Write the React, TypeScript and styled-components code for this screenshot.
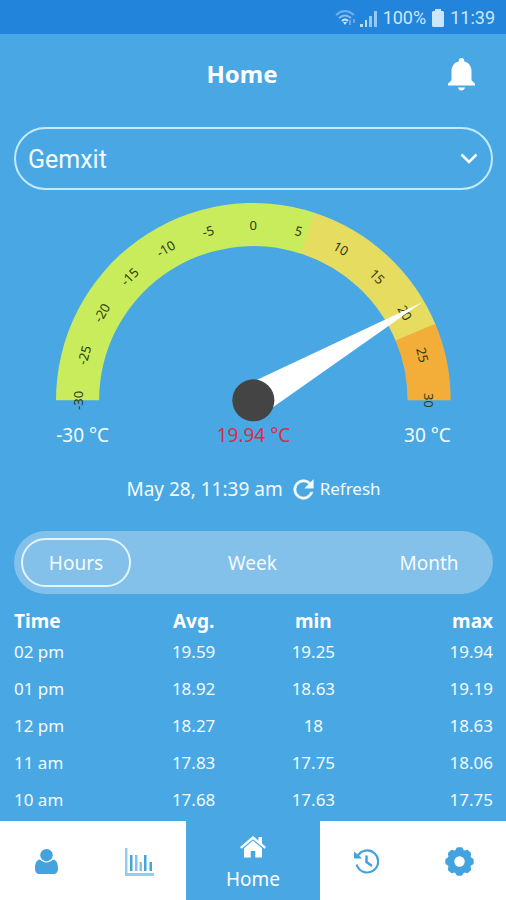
import React, { useState } from "react";
import styled, { createGlobalStyle } from "styled-components";

const BLUE = "#49a8e4";

const GlobalStyle = createGlobalStyle`
  *, *::before, *::after { box-sizing: border-box; }
  body { margin: 0; background: ${BLUE}; }
  button, select { font: inherit; color: inherit; }
`;

const Screen = styled.div`
  display: flex;
  flex-direction: column;
  min-height: 100vh;
  color: #f4fbff;
  background: ${BLUE};
  font-family: "Noto Sans", "Open Sans", sans-serif;
  font-size: 19px;
  line-height: 24px;
`;

const StatusBar = styled.div`
  display: flex;
  align-items: center;
  justify-content: flex-end;
  gap: 6px;
  height: 34px;
  padding: 2px 11px 0;
  background: #2384dc;
  color: #cbe6fb;
  font-family: Roboto, sans-serif;
  font-size: 18px;
`;

const Signals = styled.div`
  display: flex;
  align-items: center;
  gap: 3px;
`;

const Header = styled.header`
  display: grid;
  grid-template-columns: 1fr auto 1fr;
  align-items: center;
  height: 80px;
  padding: 0 31px 0 9px;
`;

const Title = styled.h1`
  grid-column: 2;
  margin: 0;
  font-size: 24px;
  line-height: 32px;
  font-weight: 700;
  color: #fff;
`;

const IconButton = styled.button`
  justify-self: end;
  display: flex;
  padding: 0;
  border: 0;
  background: none;
  color: #fff;
  cursor: pointer;
`;

const Content = styled.main`
  flex: 1;
  display: flex;
  flex-direction: column;
  padding: 13px 13px 2px 14px;
`;

const SelectBox = styled.label`
  display: grid;
  align-items: center;
  & > * { grid-area: 1 / 1; }
  & > svg { justify-self: end; margin-right: 15px; pointer-events: none; }
`;

const DeviceSelect = styled.select`
  width: 100%;
  height: 63px;
  padding: 3px 48px 0 12px;
  border: 2px solid #c3eafb;
  border-radius: 32px;
  background: transparent;
  appearance: none;
  font-family: Roboto, sans-serif;
  font-size: 25px;
`;

const Gauge = styled.section`
  align-self: center;
  width: 82.4%;
  margin-top: 13px;
`;

const Dial = styled.svg`
  display: block;
  width: 100%;
  overflow: visible;
`;

const DialText = styled.text`
  font-family: "Noto Sans", sans-serif;
  font-size: 13px;
  fill: #2e3a14;
  text-anchor: middle;
`;

const Readings = styled.div`
  display: grid;
  grid-template-columns: 1fr auto 1fr;
  margin-top: 1px;
`;

const Reading = styled.span<{ $align?: string; $alert?: boolean }>`
  text-align: ${(p) => p.$align ?? "center"};
  color: ${(p) => (p.$alert ? "#dc2b4b" : "inherit")};
`;

const UpdateRow = styled.div`
  display: flex;
  align-items: center;
  justify-content: center;
  gap: 10px;
  margin-top: 30px;
`;

const RefreshButton = styled.button`
  display: flex;
  align-items: center;
  gap: 6px;
  padding: 0;
  border: 0;
  background: none;
  font-size: 17px;
  cursor: pointer;
`;

const Tabs = styled.div`
  display: flex;
  justify-content: space-between;
  height: 63px;
  margin-top: 30px;
  padding: 7px 9px 7px 7px;
  border-radius: 32px;
  background: #83c1eb;
`;

const Tab = styled.button<{ $active: boolean }>`
  width: 110px;
  border: 2px solid ${(p) => (p.$active ? "#e2f4fd" : "transparent")};
  border-radius: 25px;
  background: none;
  cursor: pointer;
`;

const Table = styled.table`
  width: 100%;
  margin-top: 15px;
  border-collapse: collapse;
  table-layout: fixed;
  text-align: center;
`;

const HeadCell = styled.th`
  height: 24px;
  padding: 0;
  color: #fff;
  font-weight: 700;
  &:first-child { text-align: left; }
  &:last-child { text-align: right; }
`;

const Cell = styled.td`
  height: 37px;
  padding: 0;
  font-size: 17px;
  &:first-child { text-align: left; }
  &:last-child { text-align: right; }
`;

const Nav = styled.nav`
  display: flex;
  height: 79px;
  background: #fff;
`;

const NavItem = styled.a<{ $active?: boolean }>`
  display: flex;
  flex: ${(p) => (p.$active ? "0 0 134px" : "1 1 0")};
  flex-direction: column;
  align-items: center;
  justify-content: center;
  gap: 9px;
  padding-top: ${(p) => (p.$active ? "5px" : "2px")};
  color: ${(p) => (p.$active ? "#fff" : "#43a3df")};
  background: ${(p) => (p.$active ? BLUE : "#fff")};
  text-decoration: none;
`;

const CX = 197;
const CY = 197;
const OUTER = 197;
const INNER = 154;

/* The scale runs from -30 to 30 over half a turn: three degrees per unit. */
const point = (value: number, radius: number) => {
  const a = (value * 3 * Math.PI) / 180;
  return `${CX + radius * Math.sin(a)} ${CY - radius * Math.cos(a)}`;
};

const band = (from: number, to: number) =>
  `M${point(from, OUTER)} A${OUTER} ${OUTER} 0 0 1 ${point(to, OUTER)} ` +
  `L${point(to, INNER)} A${INNER} ${INNER} 0 0 0 ${point(from, INNER)} Z`;

const TICKS = [-30, -25, -20, -15, -10, -5, 0, 5, 10, 15, 20, 25, 30];

const GaugeDial = ({ value }: { value: number }) => (
  <Dial viewBox="0 0 394 219" role="img" aria-label={`Temperature ${value} °C`}>
    <path d={band(-30, 6.1)} fill="#c9ec5c" />
    <path d={band(6, 22.5)} fill="#e5dc60" />
    <path d={band(22.4, 30)} fill="#f3ae3a" />
    {TICKS.map((t) => (
      <DialText key={t} x={CX} y={CY - 170} transform={`rotate(${t * 3} ${CX} ${CY})`}>
        {t}
      </DialText>
    ))}
    <polygon
      points={`${CX - 17},${CY} ${CX},${CY - 195} ${CX + 17},${CY}`}
      fill="#fff"
      transform={`rotate(${value * 3} ${CX} ${CY})`}
    />
    <circle cx={CX} cy={CY} r="21" fill="#444" />
  </Dial>
);

const WifiIcon = () => (
  <svg width="22" height="18" viewBox="0 0 22 18" fill="none" stroke="currentColor" strokeWidth="2">
    <path d="M1 6Q10-2 19 6" opacity=".45" />
    <path d="M4 9Q10 4 16 9" opacity=".6" />
    <path d="M7 12Q10 9 13 12" />
    <path d="M8 13h4l-2 3z" fill="currentColor" stroke="none" />
    <path d="M15 11v5M19 10v4" opacity=".4" />
  </svg>
);

const SignalIcon = () => (
  <svg width="17" height="17" viewBox="0 0 17 17" fill="currentColor">
    <path d="M0 14h3v3H0zM5 10h2v7H5z" opacity=".9" />
    <path d="M9 6h3v11H9zM14 1h3v16h-3z" opacity=".7" />
  </svg>
);

const BatteryIcon = () => (
  <svg width="12" height="18" viewBox="0 0 12 18" fill="currentColor">
    <path d="M3 0h6v2h2l1 1v14l-1 1H1l-1-1V3l1-1h2z" />
  </svg>
);

const BellIcon = () => (
  <svg width="27" height="33" viewBox="0 0 27 33" fill="currentColor">
    <path d="M13.5 0c1.7 0 2.800 1.200 2.800 2.800v.8c4.700 1.200 7.200 5 7.200 9.900v8.800l3.500 3.400V27.500H0v-1.800L3.500 22.300v-8.800c0-4.900 2.500-8.700 7.200-9.900v-.8C10.700 1.200 11.800 0 13.500 0z" />
    <path d="M10 29.500h7c-.4 1.900-1.800 3-3.500 3s-3.100-1.100-3.500-3z" />
  </svg>
);

const ChevronIcon = () => (
  <svg width="18" height="12" viewBox="0 0 18 12" fill="none" stroke="#fff" strokeWidth="2.600">
    <path d="M1.500 1.500L9 9l7.500-7.500" />
  </svg>
);

const RefreshIcon = () => (
  <svg width="21" height="21" viewBox="3.500 3.500 17 17" fill="currentColor">
    <path
      d="M17.650 6.350A7.960 7.960 0 0 0 12 4a8 8 0 1 0 7.730 10h-2.080A6 6 0 1 1 12 6c1.660 0 3.140.69 4.220 1.780L13 11h7V4z"
      stroke="currentColor"
      strokeWidth=".3"
    />
  </svg>
);

const UserIcon = () => (
  <svg width="23" height="25" viewBox="0 0 23 25" fill="currentColor">
    <path d="M5 10.500c4 4 9 4 13 0 3.800.6 5 4.200 5 9 0 3.400-1.700 5.500-4.200 5.500H4.200C1.700 25 0 22.900 0 19.500c0-4.800 1.200-8.400 5-9z" />
    <circle cx="11.500" cy="6.200" r="6.700" fill="#fff" />
    <circle cx="11.500" cy="6.200" r="6.200" />
  </svg>
);

const ChartIcon = () => (
  <svg width="29" height="28" viewBox="0 0 29 28" fill="currentColor">
    <path d="M0 0h2.500v25H29v3H0z" opacity=".55" />
    <path d="M5 7h2.500v16H5zM19 7h2.500v16H19zM24.500 14H27v9h-2.500z" />
    <path d="M10 7h2.500v16H10zM14.500 14H17v9h-2.500z" opacity=".65" />
  </svg>
);

const HomeIcon = () => (
  <svg width="26" height="22" viewBox="0 0 26 22" fill="currentColor">
    <path d="M13 0L0 11l1.500 1.700L13 3.200l11.500 9.500L26 11l-4-3.400V1h-3.500v3.700z" />
    <path d="M13 4.600L4 12.200V21.500h6.700V15h4.600v6.500H22v-9.300z" />
  </svg>
);

const HistoryIcon = () => (
  <svg width="25" height="25" viewBox="0 0 25 25" fill="none" stroke="currentColor" strokeWidth="2.200">
    <path d="M3.500 7.200A11 11 0 1 1 2.600 15.500" />
    <path d="M12.500 6.500v6.500l5.500 4" strokeWidth="2.500" />
    <path d="M0 2.500V9.500H8L6.500 8z" fill="currentColor" stroke="none" />
  </svg>
);

const GEAR_TEETH = [0, 45, 90, 135, 180, 225, 270, 315];

const GearIcon = () => (
  <svg width="29" height="29" viewBox="0 0 29 29">
    <g fill="currentColor">
      <circle cx="14.500" cy="14.500" r="12" />
      {GEAR_TEETH.map((a) => (
        <path
          key={a}
          d="M9.500 5L11.200 1.500Q11.800.3 13 .3H16Q17.200.3 17.800 1.500L19.500 5z"
          transform={`rotate(${a} 14.500 14.500)`}
        />
      ))}
    </g>
    <circle cx="14.500" cy="14.500" r="5.200" fill="#fff" />
  </svg>
);

const TABS = ["Hours", "Week", "Month"];

const ROWS = [
  ["02 pm", "19.59", "19.25", "19.94"],
  ["01 pm", "18.92", "18.63", "19.19"],
  ["12 pm", "18.27", "18", "18.63"],
  ["11 am", "17.83", "17.75", "18.06"],
  ["10 am", "17.68", "17.63", "17.75"],
];

export default function App() {
  const [tab, setTab] = useState("Hours");
  return (
    <Screen>
      <GlobalStyle />
      <StatusBar>
        <Signals>
          <WifiIcon />
          <SignalIcon />
        </Signals>
        <span>100%</span>
        <BatteryIcon />
        <span>11:39</span>
      </StatusBar>
      <Header>
        <Title>Home</Title>
        <IconButton aria-label="Notifications">
          <BellIcon />
        </IconButton>
      </Header>
      <Content>
        <SelectBox>
          <DeviceSelect aria-label="Device" defaultValue="Gemxit">
            <option>Gemxit</option>
          </DeviceSelect>
          <ChevronIcon />
        </SelectBox>
        <Gauge>
          <GaugeDial value={19.94} />
          <Readings>
            <Reading $align="left">-30 °C</Reading>
            <Reading $alert>19.94 °C</Reading>
            <Reading $align="right">30 °C</Reading>
          </Readings>
        </Gauge>
        <UpdateRow>
          <span>May 28, 11:39 am</span>
          <RefreshButton>
            <RefreshIcon />
            Refresh
          </RefreshButton>
        </UpdateRow>
        <Tabs role="tablist">
          {TABS.map((t) => (
            <Tab key={t} role="tab" aria-selected={t === tab} $active={t === tab} onClick={() => setTab(t)}>
              {t}
            </Tab>
          ))}
        </Tabs>
        <Table>
          <thead>
            <tr>
              <HeadCell scope="col">Time</HeadCell>
              <HeadCell scope="col">Avg.</HeadCell>
              <HeadCell scope="col">min</HeadCell>
              <HeadCell scope="col">max</HeadCell>
            </tr>
          </thead>
          <tbody>
            {ROWS.map((row) => (
              <tr key={row[0]}>
                {row.map((cell, i) => (
                  <Cell key={i}>{cell}</Cell>
                ))}
              </tr>
            ))}
          </tbody>
        </Table>
      </Content>
      <Nav>
        <NavItem href="#profile" aria-label="Profile">
          <UserIcon />
        </NavItem>
        <NavItem href="#charts" aria-label="Charts">
          <ChartIcon />
        </NavItem>
        <NavItem href="#home" $active aria-current="page">
          <HomeIcon />
          <span>Home</span>
        </NavItem>
        <NavItem href="#history" aria-label="History">
          <HistoryIcon />
        </NavItem>
        <NavItem href="#settings" aria-label="Settings">
          <GearIcon />
        </NavItem>
      </Nav>
    </Screen>
  );
}
